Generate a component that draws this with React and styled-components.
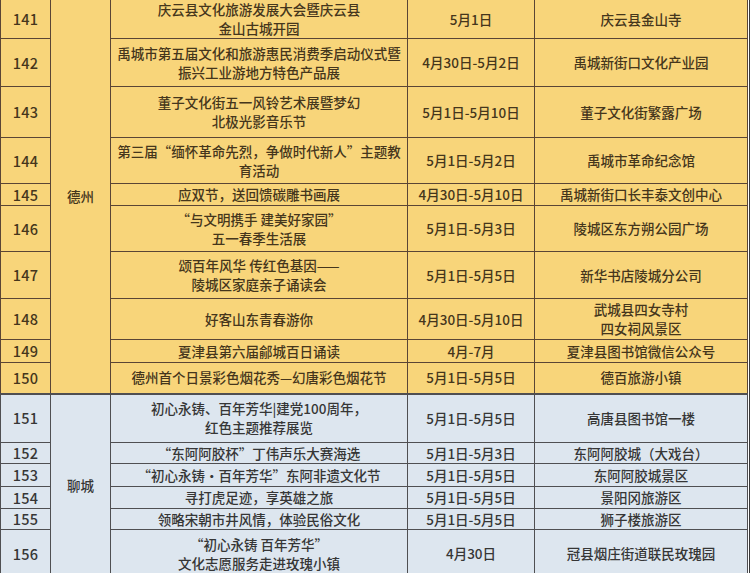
import styled, { createGlobalStyle } from "styled-components";

const GlobalStyle = createGlobalStyle`
  html, body {
    margin: 0;
    padding: 0;
    background: #ffffff;
    overflow: hidden;
  }
  body {
    width: 750px;
    height: 573px;
    font-family: "Noto Sans CJK SC", "Noto Sans", sans-serif;
  }
`;

const tones = {
  yellow: { bg: "#f8d57a", text: "#45361c", line: "#5a4535" },
  blue: { bg: "#dde6ef", text: "#363636", line: "#4f4f52" },
};

const rows = [
  { no: 141, h: 38, title: ["庆云县文化旅游发展大会暨庆云县", "金山古城开园"], date: "5月1日", place: ["庆云县金山寺"] },
  { no: 142, h: 48, title: ["禹城市第五届文化和旅游惠民消费季启动仪式暨", "振兴工业游地方特色产品展"], date: "4月30日-5月2日", place: ["禹城新街口文化产业园"] },
  { no: 143, h: 51, title: ["董子文化街五一风铃艺术展暨梦幻", "北极光影音乐节"], date: "5月1日-5月10日", place: ["董子文化街繁露广场"] },
  { no: 144, h: 46, title: ["第三届“缅怀革命先烈，争做时代新人”主题教", "育活动"], date: "5月1日-5月2日", place: ["禹城市革命纪念馆"] },
  { no: 145, h: 22, title: ["应双节，送回馈碳雕书画展"], date: "4月30日-5月10日", place: ["禹城新街口长丰泰文创中心"] },
  { no: 146, h: 46, title: ["“与文明携手 建美好家园”", "五一春季生活展"], date: "5月1日-5月3日", place: ["陵城区东方朔公园广场"] },
  { no: 147, h: 47, title: ["颂百年风华 传红色基因——", "陵城区家庭亲子诵读会"], date: "5月1日-5月5日", place: ["新华书店陵城分公司"] },
  { no: 148, h: 41, title: ["好客山东青春游你"], date: "4月30日-5月10日", place: ["武城县四女寺村", "四女祠风景区"] },
  { no: 149, h: 23, title: ["夏津县第六届鄃城百日诵读"], date: "4月-7月", place: ["夏津县图书馆微信公众号"] },
  { no: 150, h: 31, title: ["德州首个日景彩色烟花秀—幻唐彩色烟花节"], date: "5月1日-5月5日", place: ["德百旅游小镇"] },
];

const rows2 = [
  { no: 151, h: 49, title: ["初心永铸、百年芳华|建党100周年，", "红色主题推荐展览"], date: "5月1日-5月5日", place: ["高唐县图书馆一楼"] },
  { no: 152, h: 21, title: ["“东阿阿胶杯”丁伟声乐大赛海选"], date: "5月1日-5月3日", place: ["东阿阿胶城（大戏台）"] },
  { no: 153, h: 23, title: ["“初心永铸·百年芳华”东阿非遗文化节"], date: "5月1日-5月5日", place: ["东阿阿胶城景区"] },
  { no: 154, h: 22, title: ["寻打虎足迹，享英雄之旅"], date: "5月1日-5月5日", place: ["景阳冈旅游区"] },
  { no: 155, h: 21, title: ["领略宋朝市井风情，体验民俗文化"], date: "5月1日-5月5日", place: ["狮子楼旅游区"] },
  { no: 156, h: 48, title: ["“初心永铸 百年芳华”", "文化志愿服务走进玫瑰小镇"], date: "4月30日", place: ["冠县烟庄街道联民玫瑰园"] },
];

const Frame = styled.div`
  width: 750px;
  box-sizing: border-box;
  padding-right: 2px;
  border-right: 1px solid #3a3a3a;
  height: 573px;
`;

const Table = styled.table`
  width: 747px;
  table-layout: fixed;
  border-collapse: collapse;
  font-size: 13.5px;
  font-weight: 500;
  line-height: 19px;
`;

const Row = styled.tr`
  height: ${(p) => p.$h}px;
  background: ${(p) => tones[p.$tone].bg};
  color: ${(p) => tones[p.$tone].text};
`;

const Cell = styled.td`
  padding: 0;
  text-align: center;
  vertical-align: middle;
  white-space: nowrap;
  overflow: visible;
  border: 1px solid ${(p) => tones[p.$tone].line};
  ${(p) => p.$first && "border-top: none;"}
  ${(p) => p.$split && `border-top: 2px solid ${tones[p.$tone].line};`}
`;

const Line = styled.div`
  line-height: 19px;
`;

const Num = styled.span`
  font-size: 14.5px;
  letter-spacing: 0.3px;
`;

function Lines({ items }) {
  return items.map((t, i) => <Line key={i}>{t}</Line>);
}

function Group({ data, tone, city, split }) {
  return data.map((r, i) => {
    const top = { $first: !split && i === 0, $split: split && i === 0 };
    return (
      <Row key={r.no} $h={r.h} $tone={tone}>
        <Cell $tone={tone} {...top}>
          <Num>{r.no}</Num>
        </Cell>
        {i === 0 && (
          <Cell $tone={tone} rowSpan={data.length} $first={!split} $split={split}>
            {city}
          </Cell>
        )}
        <Cell $tone={tone} {...top}>
          <Lines items={r.title} />
        </Cell>
        <Cell $tone={tone} {...top}>
          {r.date}
        </Cell>
        <Cell $tone={tone} {...top}>
          <Lines items={r.place} />
        </Cell>
      </Row>
    );
  });
}

export default function App() {
  return (
    <Frame>
      <GlobalStyle />
      <Table>
        <colgroup>
          <col style={{ width: 50 }} />
          <col style={{ width: 60 }} />
          <col style={{ width: 297 }} />
          <col style={{ width: 127 }} />
          <col style={{ width: 213 }} />
        </colgroup>
        <tbody>
          <Group data={rows} tone="yellow" city="德州" />
          <Group data={rows2} tone="blue" city="聊城" split />
        </tbody>
      </Table>
    </Frame>
  );
}
